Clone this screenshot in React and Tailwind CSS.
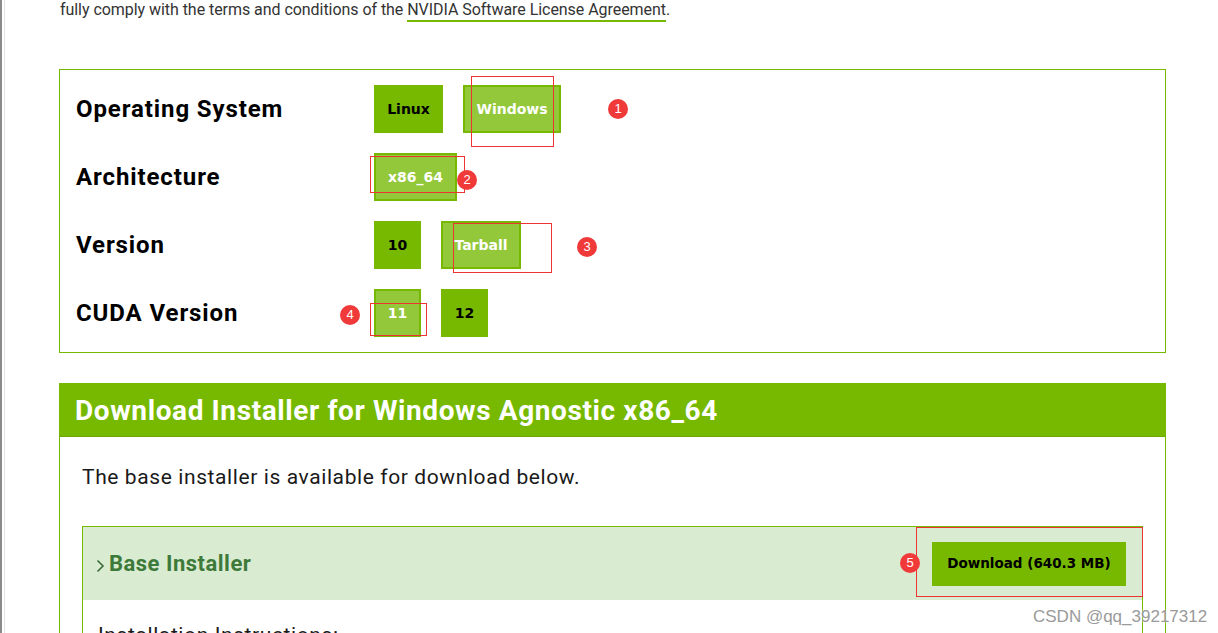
import React from 'react';

const btnFont = { fontFamily: '"DejaVu Sans", sans-serif' };
const dinFont = { fontFamily: 'Roboto, "Liberation Sans", sans-serif' };

function OptionButton({ label, width, selected }) {
  return (
    <div
      style={{ ...btnFont, width }}
      className={
        'h-12 flex items-center justify-center text-[14px] font-bold ' +
        (selected
          ? 'bg-[#93c83a] border-2 border-[#76b900] text-white'
          : 'bg-[#76b900] text-black')
      }
    >
      {label}
    </div>
  );
}

function Row({ label, children }) {
  return (
    <div className="flex items-center h-12">
      <div style={dinFont} className="w-[298px] text-[24px] font-bold text-black tracking-[0.9px]">
        {label}
      </div>
      <div className="flex gap-5">{children}</div>
    </div>
  );
}

function Badge({ n, x, y }) {
  return (
    <div
      className="absolute w-5 h-5 rounded-full bg-[#f03a3a] text-white text-[13px] flex items-center justify-center"
      style={{ left: x - 10, top: y - 10, fontFamily: '"Liberation Sans", sans-serif' }}
    >
      {n}
    </div>
  );
}

function RedBox({ x, y, w, h }) {
  return (
    <div
      className="absolute border border-[#ee3333] pointer-events-none"
      style={{ left: x, top: y, width: w, height: h }}
    />
  );
}

export default function App() {
  return (
    <div className="relative w-full h-[633px] overflow-hidden bg-white">
      <div className="absolute left-0 top-0 bottom-0 w-[2px] bg-[#8a8a8a]" />
      <div className="absolute left-[4px] top-0 bottom-0 w-px bg-[#e4e4e4]" />

      <p style={dinFont} className="pl-[60px] pt-[0px] text-[16px] leading-[20px] text-[#333] tracking-[-0.05px]">
        fully comply with the terms and conditions of the{' '}
        <span className="border-b-2 border-[#76b900] pb-[1px]">NVIDIA Software License Agreement</span>.
      </p>

      <div className="ml-[59px] mt-[49px] w-[1107px] border border-[#76b900] px-4 py-[15px] flex flex-col gap-5">
        <Row label="Operating System">
          <OptionButton label="Linux" width={69} />
          <OptionButton label="Windows" width={98} selected />
        </Row>
        <Row label="Architecture">
          <OptionButton label="x86_64" width={83} selected />
        </Row>
        <Row label="Version">
          <OptionButton label="10" width={47} />
          <OptionButton label="Tarball" width={80} selected />
        </Row>
        <Row label="CUDA Version">
          <OptionButton label="11" width={47} selected />
          <OptionButton label="12" width={47} />
        </Row>
      </div>

      <div className="ml-[59px] mt-[30px] w-[1107px]">
        <div className="h-[54px] bg-[#76b900] border-b border-[#6aa800] flex items-center px-4">
          <h2 style={dinFont} className="text-white text-[28px] font-bold tracking-[0.6px] pt-[2px]">
            Download Installer for Windows Agnostic x86_64
          </h2>
        </div>
        <div className="border-x border-[#76b900] pt-[26px] pb-10 px-[22px]">
          <p style={dinFont} className="text-[21px] leading-[28px] text-[#1a1a1a] tracking-[0.6px]">
            The base installer is available for download below.
          </p>
          <div className="mt-[35px] border border-[#76b900]">
            <div className="h-[73px] bg-[#d9ecd2] flex items-center justify-between pl-[13px] pr-4">
              <div style={dinFont} className="flex items-center text-[#3d7a3a] text-[22px] font-bold tracking-[0.5px]">
                <svg width="9" height="14" viewBox="0 0 9 14" className="mr-[4px] mt-[4px]">
                  <path d="M1.5 1.5 L7 7 L1.5 12.5" fill="none" stroke="#3d6a3a" strokeWidth="1.6" />
                </svg>
                Base Installer
              </div>
              <div
                style={btnFont}
                className="w-[194px] h-[44px] bg-[#76b900] text-black text-[13.5px] font-bold flex items-center justify-center"
              >
                Download (640.3 MB)
              </div>
            </div>
            <div className="px-[15px] pt-[20px]">
              <p style={dinFont} className="text-[21px] text-[#1a1a1a] tracking-[0.6px]">Installation Instructions:</p>
            </div>
          </div>
        </div>
      </div>

      <RedBox x={471} y={76} w={83} h={71} />
      <RedBox x={370} y={156} w={95} h={37} />
      <RedBox x={453} y={223} w={99} h={50} />
      <RedBox x={370} y={303} w={57} h={33} />
      <RedBox x={916} y={527} w={227} h={70} />
      <Badge n="1" x={618} y={109} />
      <Badge n="2" x={467} y={180} />
      <Badge n="3" x={587} y={247} />
      <Badge n="4" x={350} y={315} />
      <Badge n="5" x={910} y={563} />

      <div
        className="absolute left-[1033px] top-[604px] text-[17px] text-[#9a9a9a]"
        style={{ fontFamily: '"Liberation Sans", sans-serif', textShadow: '0 0 2px #fff' }}
      >
        CSDN @qq_39217312
      </div>
    </div>
  );
}
